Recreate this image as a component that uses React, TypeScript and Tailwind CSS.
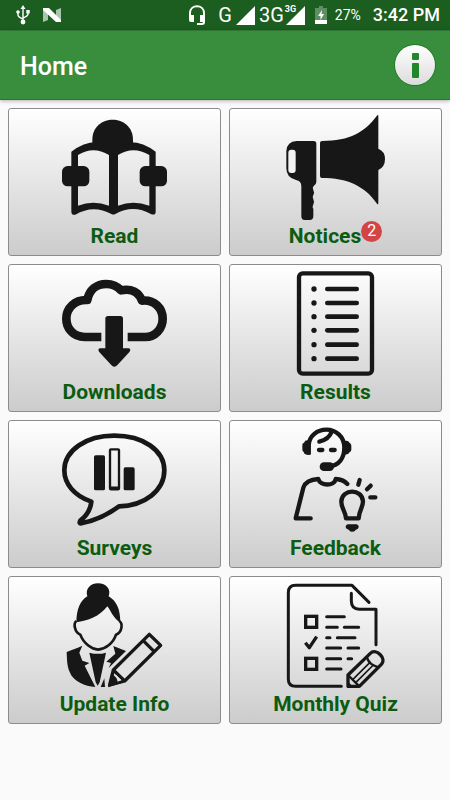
import React from 'react';

const ink = '#171717';

const ReadIcon = () => (
  <svg viewBox="36 30 315 315" className="h-[105px] w-[105px]" aria-hidden="true">
    <path d="M127 118 V105 C127 24 249 24 249 105 V118 L190 145 Z" fill={ink} />
    <path
      fill={ink}
      fillRule="evenodd"
      d="M64 140 Q128 92 190 126 Q252 92 317 140 V320 Q317 331 304 328 Q250 297 196 327 Q190 330 184 327 Q130 297 76 329 Q64 331 64 320 Z M84 150 Q130 122 177 150 V302 Q130 284 84 302 Z M204 150 Q250 122 298 150 V302 Q250 284 204 302 Z"
    />
    <rect x="36" y="183" width="82" height="61" rx="17" fill={ink} />
    <rect x="269" y="183" width="82" height="61" rx="17" fill={ink} />
  </svg>
);

const NoticesIcon = () => (
  <svg viewBox="39 30 315 315" className="h-[105px] w-[105px]" aria-hidden="true">
    <path
      fill={ink}
      d="M80 108 H131 Q139 108 139 116 V231 Q139 238 131 243 Q126 248 130 255 Q134 263 130 270 Q126 276 130 283 Q134 291 130 298 Q126 305 130 312 V334 Q130 345 119 345 H104 Q94 345 94 334 V244 Q94 227 78 225 Q49 218 49 190 V138 Q51 109 80 108 Z"
    />
    <rect x="55" y="134" width="22" height="70" rx="9" fill="#f2f2f2" />
    <path
      fill={ink}
      d="M156 108 C240 108 284 82 322 31 Q325 28 325 34 V131 Q345 139 345 162 Q345 186 325 195 V294 Q324 300 321 296 C284 242 230 219 156 219 Q150 219 150 213 V114 Q150 108 156 108 Z"
    />
  </svg>
);

const DownloadsIcon = () => (
  <svg viewBox="36 28 315 315" className="h-[105px] w-[105px]" aria-hidden="true">
    <path
      d="M154 226 H104 C68 226 49 198 49 171 C49 139 75 113 112 115 C118 84 140 67 169 67 C188 67 202 74 213 86 C244 79 267 93 276 117 C313 113 338 140 338 171 C338 202 315 226 286 226 H233"
      fill="none"
      stroke={ink}
      strokeWidth="26"
      strokeLinejoin="round"
    />
    <path
      fill={ink}
      d="M174 163 H211 Q219 163 219 171 V260 H235 Q244 261 239 270 L203 309 Q193 321 183 309 L147 270 Q142 261 151 260 H166 V171 Q166 163 174 163 Z"
    />
  </svg>
);

const ResultsIcon = () => (
  <svg viewBox="39 28 315 315" className="h-[105px] w-[105px]" aria-hidden="true">
    <rect x="87" y="35" width="219" height="301" rx="11" fill="none" stroke={ink} strokeWidth="13" />
    {[82, 124, 165, 206, 249, 291].map((y) => (
      <g key={y}>
        <circle cx="132" cy={y} r="8" fill={ink} />
        <path d={`M172 ${y} H260`} stroke={ink} strokeWidth="14" strokeLinecap="round" />
      </g>
    ))}
  </svg>
);

const SurveysIcon = () => (
  <svg viewBox="36 28 315 315" className="h-[105px] w-[105px]" aria-hidden="true">
    <path
      d="M124 252 C72 234 43 198 43 158 C43 98 108 54 193 54 C280 54 343 98 343 158 C343 218 285 264 207 266 C173 291 135 309 94 317 Q86 318 91 309 C110 294 122 273 124 252 Z"
      fill="none"
      stroke={ink}
      strokeWidth="14"
      strokeLinejoin="round"
    />
    <rect x="132" y="113" width="33" height="105" rx="5" fill={ink} />
    <rect x="180" y="95" width="27" height="120" rx="3" fill="none" stroke={ink} strokeWidth="7" />
    <path d="M180 211 H207" stroke={ink} strokeWidth="9" />
    <rect x="221" y="149" width="33" height="69" rx="5" fill={ink} />
  </svg>
);

const FeedbackIcon = () => (
  <svg viewBox="39 28 315 315" className="h-[105px] w-[105px]" aria-hidden="true">
    <g fill="none" stroke={ink} strokeWidth="13" strokeLinecap="round" strokeLinejoin="round">
      <path d="M116 105 V82 C118 54 142 36 169 36 C199 36 223 58 223 89 C223 123 206 144 176 147" />
      <path d="M185 42 C180 57 169 67 148 72" />
      <path d="M147 97 H157 M183 97 H194" />
      <path d="M122 302 H77 L100 210 Q108 186 145 184 C150 206 194 206 197 184 Q219 185 232 199" />
      <path d="M265 201 L269 187 M291 215 L302 204 M301 239 H316" />
      <path d="M228 302 C226 278 213 271 214 251 C216 213 276 212 279 251 C279 271 267 278 266 302 Z" />
    </g>
    <path
      fill={ink}
      d="M122 70 V111 H112 Q103 111 101 103 Q97 101 97 95 V82 Q97 76 102 75 Q105 68 112 68 Z M222 69 H230 Q237 70 239 76 Q244 78 244 84 V96 Q244 102 239 103 Q236 111 222 111 Z"
    />
    <rect x="149" y="134" width="43" height="26" rx="13" fill={ink} />
    <path fill={ink} d="M233 320 H260 Q267 322 266 329 Q265 335 258 336 Q246 349 236 336 Q228 335 227 329 Q226 322 233 320 Z" />
  </svg>
);

const UpdateIcon = () => (
  <svg viewBox="36 28 315 315" className="h-[105px] w-[105px]" aria-hidden="true">
    <path
      fill={ink}
      d="M50 235 C65 228 82 224 97 216 L88 237 L97 261 L118 268 L104 276 L136 340 C105 338 70 324 59 295 C50 275 51 252 50 235 Z"
    />
    <path fill={ink} d="M118 237 Q144 244 168 237 L149 326 L143 336 L137 326 Z" />
    <path fill={ink} d="M190 217 L228 232 L176 283 L183 268 L169 264 L196 240 Z" />
    <path fill={ink} d="M152 340 L163 314 L165 340 Z" />
    <path
      d="M79 142 C70 149 73 176 91 183 C101 211 127 227 144 228 C165 227 190 209 198 183 C217 176 219 149 208 142"
      fill="none"
      stroke={ink}
      strokeWidth="8"
      strokeLinejoin="round"
    />
    <path
      fill={ink}
      d="M79 146 C80 105 91 81 112 68 C105 47 120 29 144 29 C169 29 184 47 176 68 C199 82 211 105 211 147 C189 133 183 112 172 98 C149 129 113 141 79 146 Z"
    />
    <path
      d="M179 334 L190 289 L298 182 L332 215 L224 322 Z"
      fill="#e2e2e2"
      stroke={ink}
      strokeWidth="10"
      strokeLinejoin="round"
    />
    <path d="M190 289 L224 322 M279 200 L312 233" stroke={ink} strokeWidth="10" />
    <path fill={ink} d="M174 341 L184 298 L215 328 Z" />
    <path fill="#e0e0e0" d="M196 302 L214 319 L203 324 Z" />
  </svg>
);

const QuizIcon = () => (
  <svg viewBox="39 28 315 315" className="h-[105px] w-[105px]" aria-hidden="true">
    <g fill="none" stroke={ink} strokeWidth="9" strokeLinecap="round" strokeLinejoin="round">
      <path d="M214 338 H77 Q55 338 55 316 V57 Q55 35 77 35 H246 L297 86" />
      <path d="M318 213 V107 H268 Q244 106 244 82 V59" />
      <path d="M170 129 H223 M170 161 H202 M223 161 H266 M170 192 H180 M202 192 H255" />
      <path d="M170 223 H212 M234 223 H266 M170 255 H212 M234 255 H245 M170 286 H213" />
    </g>
    <g fill="none" stroke={ink} strokeWidth="10">
      <rect x="107" y="128" width="33" height="33" />
      <rect x="107" y="254" width="33" height="33" />
      <path d="M106 207 L118 222 L140 189" strokeLinejoin="round" />
      <path
        d="M234 338 V304 L301 239 C318 222 351 254 334 272 L268 338 Z"
        strokeLinejoin="round"
      />
      <path d="M234 304 L268 338 M290 250 C297 270 307 275 325 281" strokeWidth="7" />
      <path d="M248 318 L300 266 M257 327 L310 274" strokeWidth="5" />
    </g>
    <path fill={ink} d="M231 321 L253 342 H231 Z" />
  </svg>
);

const menuItems = [
  { title: 'Read', icon: <ReadIcon /> },
  { title: 'Notices', icon: <NoticesIcon />, count: 2 },
  { title: 'Downloads', icon: <DownloadsIcon /> },
  { title: 'Results', icon: <ResultsIcon /> },
  { title: 'Surveys', icon: <SurveysIcon /> },
  { title: 'Feedback', icon: <FeedbackIcon /> },
  { title: 'Update Info', icon: <UpdateIcon /> },
  { title: 'Monthly Quiz', icon: <QuizIcon /> },
];

const SignalIcon = () => (
  <svg viewBox="0 0 19 19" className="h-[19px] w-[19px]" fill="#fff" aria-hidden="true">
    <path d="M19 0 V19 H0 Z" />
  </svg>
);

const StatusBar: React.FC = () => (
  <div className="flex h-[30px] items-center justify-between bg-[#1b5e20] pr-[10px] pl-4 text-white">
    <div className="flex items-center gap-3">
      <svg viewBox="0 0 14 20" className="h-5 w-[14px]" aria-hidden="true">
        <path d="M7 3 V17 M2 8 V10 Q2 12 7 14 M12 7 V9 Q12 11 7 13" fill="none" stroke="#fff" strokeWidth="1.4" />
        <path d="M7 0 L9.5 4 H4.5 Z M10.3 5 H13.7 V8.4 H10.3 Z" fill="#fff" />
        <circle cx="2" cy="7" r="1.8" fill="#fff" />
        <circle cx="7" cy="17" r="2.4" fill="#fff" />
      </svg>
      <svg viewBox="0 0 20 16" className="h-4 w-5" aria-hidden="true">
        <path d="M1 1 L6 3 V13 L1 15 Z M19 1 L14 3 V13 L19 15 Z" fill="#a9c6ab" />
        <path d="M1 1 H7 L19 13 V15 H14 L1 3 Z" fill="#fff" />
      </svg>
    </div>
    <div className="flex items-center">
      <svg viewBox="0 0 18 20" className="mr-3 h-5 w-[18px]" aria-hidden="true">
        <path d="M2 12 V8 C2 -1 16 -1 16 8 V17 Q16 19 14 19 H9" fill="none" stroke="#fff" strokeWidth="2" />
        <path d="M1 10 H6 V17 H3 Q1 17 1 15 Z M12 10 H17 V17 H12 Z" fill="#fff" />
      </svg>
      <span className="mr-1 text-xl leading-5">G</span>
      <SignalIcon />
      <span className="ml-1 text-xl leading-5">3G</span>
      <span className="relative ml-0.5">
        <SignalIcon />
        <span className="absolute -top-px -left-px text-[9px] leading-[9px] font-bold">
          <span className="bg-[#1b5e20]">3G</span>
        </span>
      </span>
      <svg viewBox="0 0 12 18" className="ml-[10px] h-[18px] w-3" aria-hidden="true">
        <path d="M4 0 H8 V2 H12 V18 H0 V2 H4 Z" fill="#5f8e63" />
        <path d="M0 14 H12 V18 H0 Z M7 4 L3 10 H5.500 V14 L9 8 H6.500 Z" fill="#fff" />
      </svg>
      <span className="ml-2 text-sm">27%</span>
      <span className="ml-3 text-lg leading-5 font-medium">3:42 PM</span>
    </div>
  </div>
);

const App: React.FC = () => {
  return (
    <div className="min-h-screen bg-[#fafafa] font-['Roboto',sans-serif]">
      <StatusBar />

      {/* Toolbar */}
      <header className="flex h-[70px] items-center justify-between border-b border-[#1b8020] bg-[#388e3c] pr-[15px] pl-5 shadow-[0_1px_4px_rgba(0,0,0,0.3),inset_0_1px_0_rgba(0,0,0,0.15)]">
        <h1 className="mt-1 text-[25px] font-medium text-white">Home</h1>
        <button
          type="button"
          aria-label="About"
          className="flex h-10 w-10 items-center justify-center rounded-full bg-gradient-to-b from-white to-[#dcdcdc] shadow-[0_0_0_1px_#1b8020]"
        >
          <svg viewBox="0 0 8 26" className="h-[26px] w-2" fill="#22862a" aria-hidden="true">
            <rect x="1" y="1" width="7" height="7" rx="1" />
            <rect x="1" y="11" width="7" height="15" rx="1" />
          </svg>
        </button>
      </header>

      {/* Menu grid */}
      <main className="grid grid-cols-2 gap-2 p-2">
        {menuItems.map((item) => (
          <button
            key={item.title}
            type="button"
            className="flex h-[148px] flex-col items-center rounded-[3px] border border-[#8c8c8c] bg-gradient-to-b from-white to-[#cccccc] pt-1.5"
          >
            {item.icon}
            <span className="flex items-center text-[21px] leading-8 font-bold text-[#0b5c10]">
              {item.title}
              {item.count && (
                <span className="mb-2.5 flex h-[21px] w-[21px] items-center justify-center rounded-full bg-[#d34545] text-base font-normal text-white">
                  {item.count}
                </span>
              )}
            </span>
          </button>
        ))}
      </main>
    </div>
  );
};

export default App;
